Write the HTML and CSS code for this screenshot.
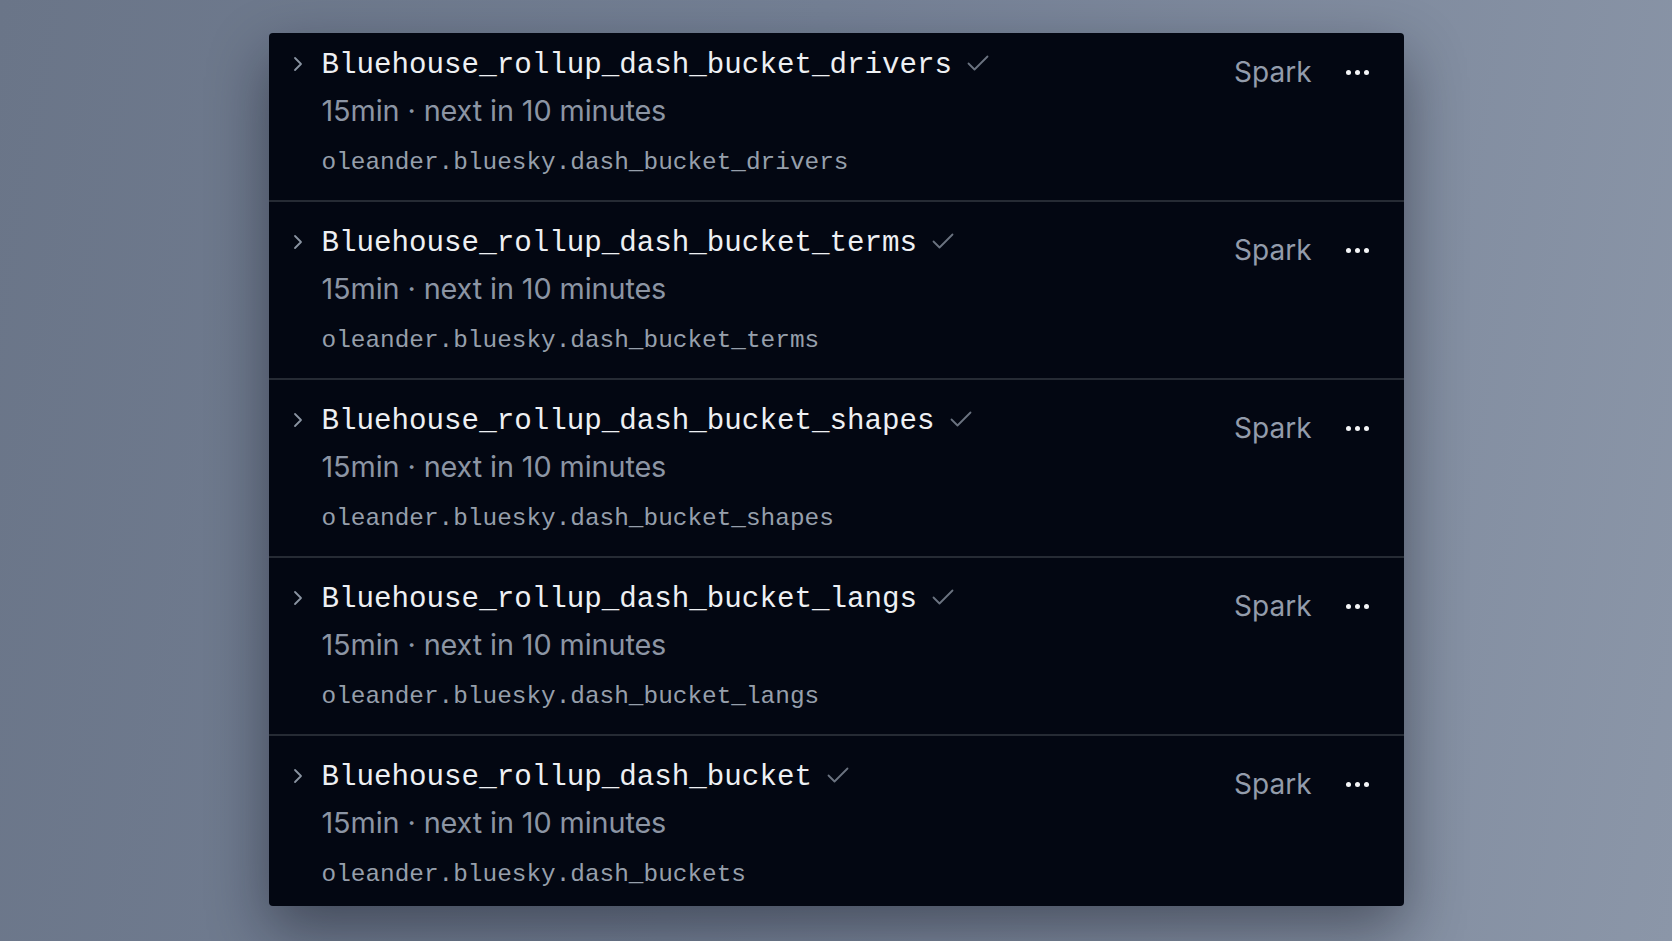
FILE: index.html
```html
<!DOCTYPE html>
<html lang="en">
<head>
    <meta charset="UTF-8">
    <meta name="viewport" content="width=device-width, initial-scale=1.0">
    <title>Jobs</title>
    <link rel="stylesheet" href="styles.css">
</head>
<body>
    <div class="panel">
        <div class="job-list">
            <div class="job">
                <svg class="chevron" viewBox="0 0 10 16"><path d="M2 2l6 6-6 6"/></svg>
                <div class="job-main">
                    <div class="job-title">
                        <span>Bluehouse_rollup_dash_bucket_drivers</span>
                        <svg class="check" viewBox="0 0 22 16"><path d="M1.5 8.5l6 6 13-13"/></svg>
                    </div>
                    <div class="job-schedule">15min · next in 10 minutes</div>
                    <div class="job-path">oleander.bluesky.dash_bucket_drivers</div>
                </div>
                <div class="job-side">
                    <span class="engine">Spark</span>
                    <button class="more"><i></i><i></i><i></i></button>
                </div>
            </div>
            <div class="job">
                <svg class="chevron" viewBox="0 0 10 16"><path d="M2 2l6 6-6 6"/></svg>
                <div class="job-main">
                    <div class="job-title">
                        <span>Bluehouse_rollup_dash_bucket_terms</span>
                        <svg class="check" viewBox="0 0 22 16"><path d="M1.5 8.5l6 6 13-13"/></svg>
                    </div>
                    <div class="job-schedule">15min · next in 10 minutes</div>
                    <div class="job-path">oleander.bluesky.dash_bucket_terms</div>
                </div>
                <div class="job-side">
                    <span class="engine">Spark</span>
                    <button class="more"><i></i><i></i><i></i></button>
                </div>
            </div>
            <div class="job">
                <svg class="chevron" viewBox="0 0 10 16"><path d="M2 2l6 6-6 6"/></svg>
                <div class="job-main">
                    <div class="job-title">
                        <span>Bluehouse_rollup_dash_bucket_shapes</span>
                        <svg class="check" viewBox="0 0 22 16"><path d="M1.5 8.5l6 6 13-13"/></svg>
                    </div>
                    <div class="job-schedule">15min · next in 10 minutes</div>
                    <div class="job-path">oleander.bluesky.dash_bucket_shapes</div>
                </div>
                <div class="job-side">
                    <span class="engine">Spark</span>
                    <button class="more"><i></i><i></i><i></i></button>
                </div>
            </div>
            <div class="job">
                <svg class="chevron" viewBox="0 0 10 16"><path d="M2 2l6 6-6 6"/></svg>
                <div class="job-main">
                    <div class="job-title">
                        <span>Bluehouse_rollup_dash_bucket_langs</span>
                        <svg class="check" viewBox="0 0 22 16"><path d="M1.5 8.5l6 6 13-13"/></svg>
                    </div>
                    <div class="job-schedule">15min · next in 10 minutes</div>
                    <div class="job-path">oleander.bluesky.dash_bucket_langs</div>
                </div>
                <div class="job-side">
                    <span class="engine">Spark</span>
                    <button class="more"><i></i><i></i><i></i></button>
                </div>
            </div>
            <div class="job">
                <svg class="chevron" viewBox="0 0 10 16"><path d="M2 2l6 6-6 6"/></svg>
                <div class="job-main">
                    <div class="job-title">
                        <span>Bluehouse_rollup_dash_bucket</span>
                        <svg class="check" viewBox="0 0 22 16"><path d="M1.5 8.5l6 6 13-13"/></svg>
                    </div>
                    <div class="job-schedule">15min · next in 10 minutes</div>
                    <div class="job-path">oleander.bluesky.dash_buckets</div>
                </div>
                <div class="job-side">
                    <span class="engine">Spark</span>
                    <button class="more"><i></i><i></i><i></i></button>
                </div>
            </div>
        </div>
    </div>
</body>
</html>
```

FILE: styles.css
```css
* {
    box-sizing: border-box;
    margin: 0;
    padding: 0;
}

body {
    height: 100vh;
    display: flex;
    align-items: flex-start;
    justify-content: center;
    padding-top: 33px;
    font-family: Inter, "Noto Sans", sans-serif;
    background: linear-gradient(100deg, #6a7588 0%, #748095 45%, #8b96a8 100%);
    overflow: hidden;
}

.panel {
    width: 1135px;
    height: 873px;
    overflow: hidden;
    background: #030712;
    border-radius: 4px;
    box-shadow: 0 24px 60px rgba(10, 14, 24, 0.45);
}

/* list is scrolled a little, first row is cut at the top */
.job-list {
    margin-top: -9px;
}

.job {
    height: 178px;
    display: flex;
    align-items: flex-start;
    padding: 0 35px 0 24px;
    border-bottom: 2px solid #262b34;
}

.chevron {
    width: 10px;
    height: 16px;
    margin-top: 32px;
    margin-right: 19px;
    flex-shrink: 0;
    fill: none;
    stroke: #8a93a1;
    stroke-width: 1.8;
    stroke-linecap: round;
    stroke-linejoin: round;
}

.job-main {
    flex: 1;
    padding-top: 21px;
}

.job-title {
    display: flex;
    align-items: center;
    gap: 15px;
    height: 40px;
    font-family: "Liberation Mono", monospace;
    font-size: 29.2px;
    color: #eef0f3;
}

.check {
    width: 22px;
    height: 16px;
    margin-top: -4px;
    fill: none;
    stroke: #6b7380;
    stroke-width: 1.8;
    stroke-linecap: round;
    stroke-linejoin: round;
}

.job-schedule {
    margin-top: 6px;
    line-height: 40px;
    font-size: 28.8px;
    letter-spacing: -0.1px;
    color: #8c95a4;
}

.job-path {
    margin-top: 14px;
    line-height: 36px;
    font-family: "Liberation Mono", monospace;
    font-size: 24.4px;
    color: #969fab;
}

.job-side {
    display: flex;
    align-items: center;
    gap: 34px;
    height: 40px;
    margin-top: 28px;
}

.engine {
    font-size: 28px;
    color: #939cab;
}

.more {
    display: flex;
    gap: 4px;
    background: none;
    border: none;
    cursor: pointer;
}

.more i {
    width: 5px;
    height: 5px;
    border-radius: 50%;
    background: #f4f5f7;
}
```
